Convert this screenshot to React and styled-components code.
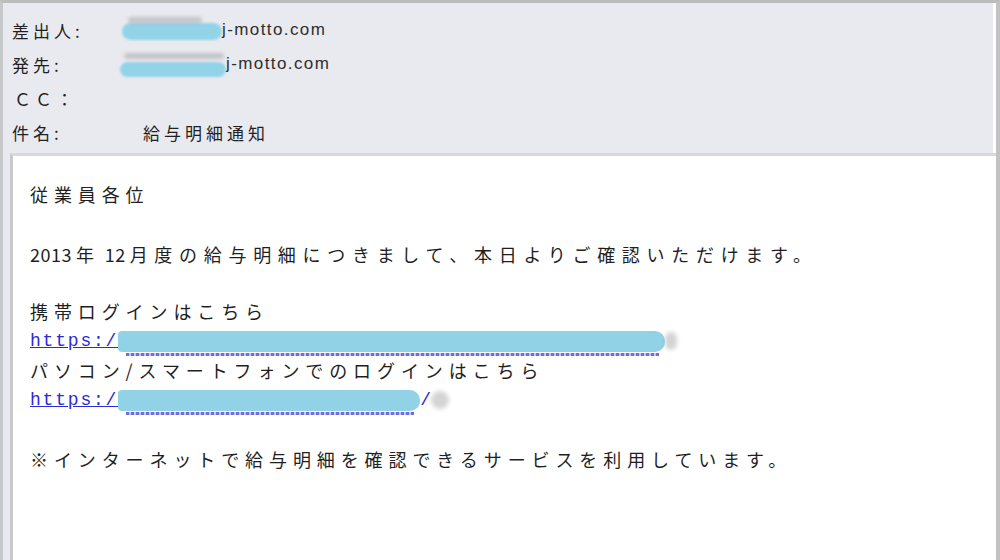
import React from 'react';
import styled, { createGlobalStyle } from 'styled-components';

const GlobalStyle = createGlobalStyle`
    html, body {
        margin: 0;
        padding: 0;
        background: #ffffff;
    }
`

const Frame = styled.div`
    box-sizing: border-box;
    width: 1000px;
    height: 560px;
    display: flex;
    flex-direction: column;
    background: #e8eaef;
    border-top: 3px solid #bcbcbc;
    border-left: 3px solid #c6c7c9;
    border-right: 4px solid #c2c2c2;
    overflow: hidden;
    font-family: "Noto Sans CJK JP", "Noto Sans", sans-serif;
    color: #1f1f1f;
`

const Header = styled.div`
    padding: 10px 0 4px 9px;
    border-right: 3px solid #ffffff;
`

const HeaderRow = styled.div`
    display: flex;
    align-items: center;
    height: 34px;
    font-size: 17px;
    letter-spacing: 4px;
`

const Label = styled.div`
    width: 108px;
    flex: none;
    padding-left: ${p => p.$indent || 0}px;
    box-sizing: border-box;
`

const Value = styled.div`
    display: flex;
    align-items: center;
    padding-left: ${p => p.$indent || 0}px;
`

const Domain = styled.span`
    font-family: "Liberation Sans", Arial, sans-serif;
    font-size: 17px;
    letter-spacing: 1.4px;
    color: #2e2e2e;
`

const Redacted = styled.span`
    position: relative;
    display: inline-block;
    width: ${p => p.$w}px;
    height: ${p => p.$h || 17}px;
    margin-top: ${p => p.$dy || 0}px;
    background: #93d3e8;
    border-radius: 9px;
    filter: blur(0.8px);

    &::before {
        content: '';
        position: absolute;
        left: ${p => p.$smudgeLeft || 6}px;
        right: ${p => p.$smudgeRight || 20}px;
        top: ${p => p.$smudgeTop || -5}px;
        height: 6px;
        border-radius: 3px;
        background: rgba(150, 150, 150, 0.45);
        filter: blur(1.5px);
    }
`

const Body = styled.div`
    flex: 1;
    margin-left: 7px;
    background: #ffffff;
    border-top: 3px solid #d9d9db;
    border-left: 3px solid #c9c9cb;
    padding: 24px 0 0 17px;
    font-size: 18px;
    letter-spacing: 5.9px;
    line-height: 29.5px;
`

const Paragraph = styled.div`
    margin-bottom: ${p => p.$gap ?? 28}px;
`

const Line = styled.div`
    display: flex;
    align-items: center;
    height: 29.5px;
    white-space: nowrap;
    letter-spacing: ${p => p.$spacing ? `${p.$spacing}px` : 'inherit'};
`

const Num = styled.span`
    letter-spacing: 0.5px;
    margin: 0 ${p => p.$right ?? 4}px 0 ${p => p.$left ?? 0}px;
`

const LinkText = styled.a`
    font-family: "Liberation Mono", "Courier New", monospace;
    font-size: 18px;
    letter-spacing: 1.8px;
    color: #2b2bd6;
    text-decoration: underline;
`

const LinkBlob = styled.span`
    position: relative;
    display: inline-block;
    width: ${p => p.$w}px;
    height: 21px;
    background: #91d2e7;
    border-radius: 4px 10px 10px 4px;
    filter: blur(0.6px);

    &::after {
        content: '';
        position: absolute;
        left: 8px;
        right: 6px;
        bottom: -4px;
        height: 3px;
        background: repeating-linear-gradient(90deg, #4a4ad8 0 3px, #b8b8e8 3px 5px);
        opacity: 0.8;
    }
`

const Smudge = styled.span`
    display: inline-block;
    width: ${p => p.$w}px;
    height: 18px;
    border-radius: 9px;
    background: rgba(170, 170, 170, 0.5);
    filter: blur(2px);
`

const Slash = styled.span`
    font-family: "Liberation Mono", monospace;
    color: #2b2bd6;
    letter-spacing: 0;
    font-size: 18px;
`

const App = () => {
    return (
        <>
            <GlobalStyle />
            <Frame>
                <Header>
                    <HeaderRow>
                        <Label>差出人:</Label>
                        <Value $indent={2}>
                            <Redacted $w={100} $h={17} $dy={3} $smudgeTop={-6} />
                            <Domain>j-motto.com</Domain>
                        </Value>
                    </HeaderRow>
                    <HeaderRow>
                        <Label>発先:</Label>
                        <Value $indent={-3}>
                            <Redacted $w={106} $h={15} $dy={10} $smudgeLeft={4} $smudgeRight={2} $smudgeTop={-9} />
                            <Domain>j-motto.com</Domain>
                        </Value>
                    </HeaderRow>
                    <HeaderRow>
                        <Label $indent={2}>ＣＣ：</Label>
                    </HeaderRow>
                    <HeaderRow>
                        <Label>件名:</Label>
                        <Value $indent={23}>給与明細通知</Value>
                    </HeaderRow>
                </Header>
                <Body>
                    <Paragraph $gap={30}>
                        <Line>従業員各位</Line>
                    </Paragraph>
                    <Paragraph>
                        <Line $spacing={6.7}>
                            <Num>2013</Num>年<Num $left={4}>12</Num>月度の給与明細につきまして、本日よりご確認いただけます。
                        </Line>
                    </Paragraph>
                    <Paragraph $gap={30}>
                        <Line>携帯ログインはこちら</Line>
                        <Line>
                            <LinkText href="#">https:/</LinkText>
                            <LinkBlob $w={547} />
                            <Smudge $w={12} />
                        </Line>
                        <Line>パソコン/スマートフォンでのログインはこちら</Line>
                        <Line>
                            <LinkText href="#">https:/</LinkText>
                            <LinkBlob $w={302} />
                            <Slash>/</Slash>
                            <Smudge $w={18} />
                        </Line>
                    </Paragraph>
                    <Paragraph $gap={0}>
                        <Line>※インターネットで給与明細を確認できるサービスを利用しています。</Line>
                    </Paragraph>
                </Body>
            </Frame>
        </>
    );
}

export default App;
